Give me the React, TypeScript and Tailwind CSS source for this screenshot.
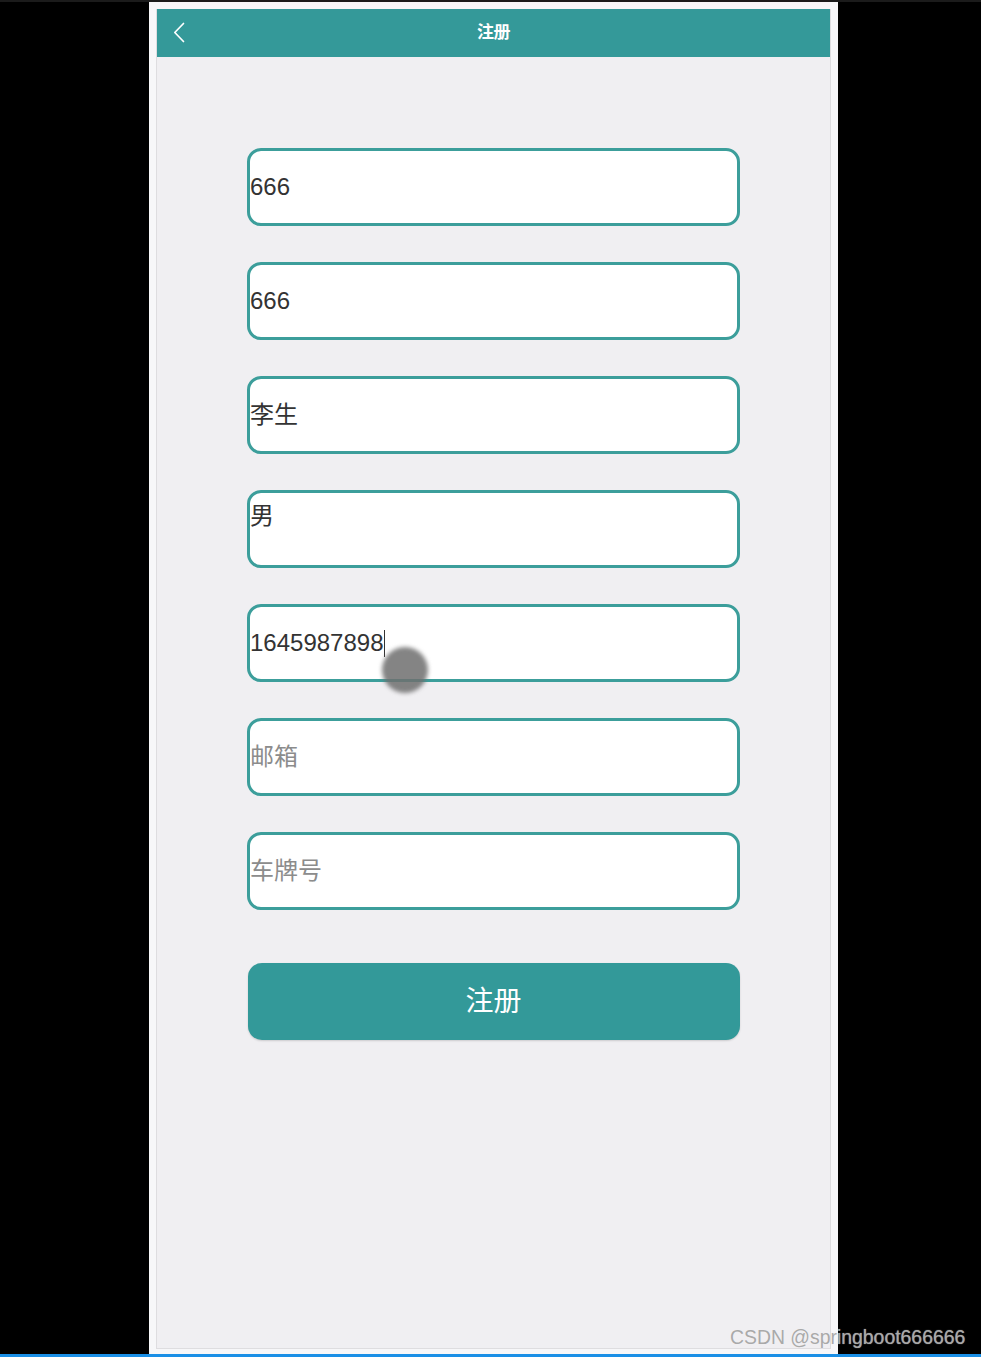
import React from 'react';

const fields = [
  { value: '666' },
  { value: '666' },
  { value: '李生' },
  { value: '男', top: true },
  { value: '1645987898', caret: true },
  { placeholder: '邮箱' },
  { placeholder: '车牌号' },
];

const font = '"Liberation Sans", "Noto Sans CJK SC", sans-serif';

function Field({ value, placeholder, caret, top }: { value?: string; placeholder?: string; caret?: boolean; top?: boolean }) {
  return (
    <div
      className={`h-[78px] w-[493px] rounded-[14px] border-[3px] border-[#3c9e9b] bg-white flex ${top ? 'items-start pt-[9px]' : 'items-center'}`}
    >
      {value ? (
        <span className="text-[24px] leading-[28px] text-[#333333] flex items-center">
          {value}
          {caret && <span className="ml-px inline-block w-px h-[27px] bg-[#333333]" />}
        </span>
      ) : (
        <span className="text-[24px] leading-[28px] text-[#8c8c8c]">{placeholder}</span>
      )}
    </div>
  );
}

export default function App() {
  return (
    <div className="relative min-h-[1357px] bg-black flex flex-col" style={{ fontFamily: font }}>
      <div className="h-[2px] bg-[#1b1b1b]" />
      <div className="pl-[149px]">
        <div className="w-[689px] h-[1352px] bg-[#f7f7f9] pt-[7px] px-[7px] pb-[5px]">
          <div className="h-full flex flex-col border border-t-0 border-[#dedde0] bg-[#f0eff2]">
            {/* header */}
            <div className="h-[48px] bg-[#349999] flex items-center relative">
              <svg className="absolute left-[16px] top-[13px]" width="12" height="21" viewBox="0 0 12 21" fill="none">
                <polyline points="10.5,1.5 1.8,10.5 10.5,19.5" stroke="white" strokeWidth="1.7" strokeLinecap="round" strokeLinejoin="round" />
              </svg>
              <span className="mx-auto text-white font-bold text-[17px] tracking-tight">注册</span>
            </div>

            <div className="flex flex-col items-center pt-[91px] gap-[36px]">
              {fields.map((f, i) => (
                <Field key={i} {...f} />
              ))}
            </div>

            <div className="flex justify-center pt-[53px]">
              <button className="h-[77px] w-[492px] rounded-[14px] bg-[#339999] text-white text-[28px] shadow-[0_1px_2px_rgba(0,0,0,0.15)]">
                注册
              </button>
            </div>
          </div>
        </div>
      </div>
      <div className="h-[3px] bg-[#1a8fe6]" />

      {/* touch pointer */}
      <div className="absolute left-[382px] top-[647px] w-[46px] h-[46px] rounded-full bg-[#6e6e6e]/85 blur-[2px]" />

      {/* watermark */}
      <div className="absolute left-[730px] top-[1325px] text-[19.4px] leading-[24px] text-[#a9a9a9] whitespace-nowrap [text-shadow:0_0_1px_rgba(255,255,255,0.6)]">
        CSDN @springboot666666
      </div>
    </div>
  );
}
